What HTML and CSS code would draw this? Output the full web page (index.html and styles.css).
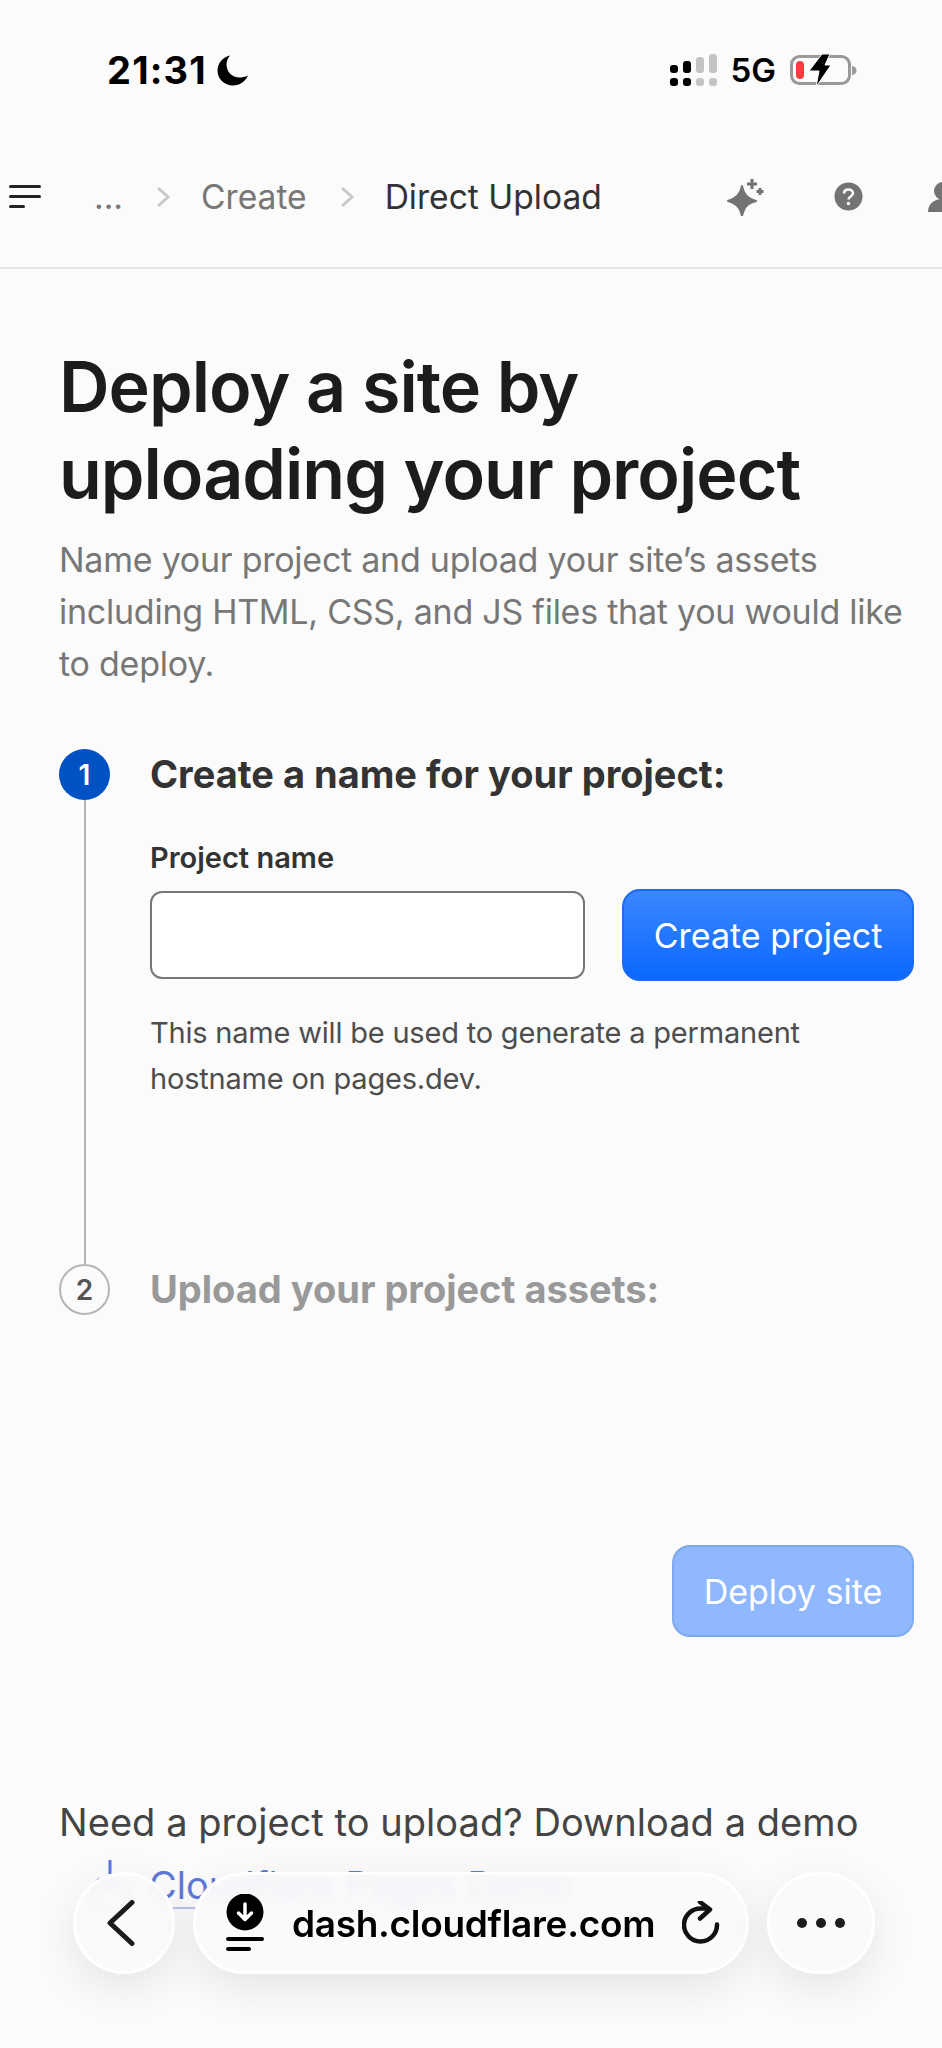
FILE: index.html
```html
<!DOCTYPE html>
<html lang="en">
<head>
    <meta charset="UTF-8">
    <meta name="viewport" content="width=device-width, initial-scale=1.0">
    <title>Direct Upload</title>
    <link rel="stylesheet" href="styles.css">
</head>
<body>
    <div class="status-bar">
        <div class="status-left">
            <span class="clock">21:31</span>
            <svg class="moon" width="32" height="31" viewBox="0 0 32 31"><path d="M13 0.5C6 2 0.5 8 0.5 15.500C0.500 24 7.500 30.500 16 30.500C22.500 30.500 28.500 26.500 31 20.500C28 22 25 22.500 22.500 22.500C15 22.500 9.500 16.500 9.500 9.500C9.500 6 10.800 3 13 0.500Z" fill="#000"/></svg>
        </div>
        <div class="status-right">
            <svg width="48" height="33" viewBox="0 0 48 33">
                <rect x="0" y="11" width="8" height="8" rx="3" fill="#000"/>
                <rect x="13" y="7" width="8" height="12" rx="3" fill="#000"/>
                <rect x="26" y="3" width="8" height="16" rx="3" fill="#c4c4c4"/>
                <rect x="39" y="0" width="8" height="19" rx="3" fill="#c4c4c4"/>
                <rect x="0" y="24" width="8" height="8" rx="3" fill="#000"/>
                <rect x="13" y="24" width="8" height="8" rx="3" fill="#000"/>
                <rect x="26" y="24" width="8" height="8" rx="3" fill="#c4c4c4"/>
                <rect x="39" y="24" width="8" height="8" rx="3" fill="#c4c4c4"/>
            </svg>
            <span class="network">5G</span>
            <svg width="67" height="33" viewBox="0 0 67 33">
                <rect x="1.500" y="2.500" width="58" height="27" rx="8" fill="none" stroke="#999" stroke-width="3"/>
                <path d="M62 12C65 12.500 66.500 14 66.500 16.500C66.500 19 65 20.500 62 21Z" fill="#999"/>
                <rect x="6" y="7" width="8" height="18" rx="4" fill="#ff3b3f"/>
                <path d="M32 0L40 0L35 11H41L26 33L29 17H19Z" fill="#000" stroke="#fbfbfb" stroke-width="1"/>
            </svg>
        </div>
    </div>

    <div class="nav">
        <svg class="menu-icon" width="32" height="24" viewBox="0 0 32 24">
            <rect x="0" y="0" width="32" height="3" rx="1.500" fill="#222"/>
            <rect x="0" y="10" width="32" height="3" rx="1.500" fill="#222"/>
            <rect x="0" y="20" width="16" height="3" rx="1.500" fill="#222"/>
        </svg>
        <span class="crumb crumb-more">...</span>
        <svg class="chevron" width="14" height="22" viewBox="0 0 14 22"><path d="M2 2L12 11L2 20" fill="none" stroke="#c9c9c9" stroke-width="3"/></svg>
        <span class="crumb">Create</span>
        <svg class="chevron" width="14" height="22" viewBox="0 0 14 22"><path d="M2 2L12 11L2 20" fill="none" stroke="#c9c9c9" stroke-width="3"/></svg>
        <span class="crumb crumb-current">Direct Upload</span>
        <svg class="spark-icon" width="38" height="38" viewBox="0 0 38 38">
            <path d="M15 8C16.500 16 20 20 29 23C20 25.500 17 29 15 38C13 29 9.500 25.500 1 23C9.500 20 13.500 16 15 8Z" fill="#737373" stroke="#737373" stroke-linejoin="round" stroke-width="2"/>
            <path d="M25 1V11M20 6H30" stroke="#737373" stroke-width="3"/>
            <path d="M33 10V17M29.500 13.500H36.500" stroke="#737373" stroke-width="3"/>
        </svg>
        <svg class="help-icon" width="29" height="29" viewBox="0 0 29 29">
            <circle cx="14.500" cy="14.500" r="14" fill="#737373"/>
            <path d="M10 11.500C10 8.800 12 7.500 14.500 7.500C17 7.500 19 9 19 11.300C19 14.500 14.500 14.500 14.500 17.500" fill="none" stroke="#fbfbfb" stroke-width="2.500"/>
            <circle cx="14.500" cy="21.500" r="1.700" fill="#fbfbfb"/>
        </svg>
        <svg class="user-icon" width="30" height="30" viewBox="0 0 30 30">
            <circle cx="15" cy="9" r="9" fill="#737373"/>
            <path d="M0 30C0 22 6 17 15 17C24 17 30 22 30 30Z" fill="#737373"/>
        </svg>
    </div>

    <div class="content">
        <h1 class="title">Deploy a site by uploading your project</h1>
        <p class="intro">Name your project and upload your site’s assets including HTML, CSS, and JS files that you would like to deploy.</p>

        <div class="step step-first">
            <div class="step-track">
                <div class="step-num step-num-active">1</div>
                <div class="step-line"></div>
            </div>
            <div class="step-body">
                <h2 class="step-title">Create a name for your project:</h2>
                <div class="field-label">Project name</div>
                <div class="field-row">
                    <input type="text" class="field-input">
                    <div class="btn">Create project</div>
                </div>
                <p class="field-help">This name will be used to generate a permanent hostname on pages.dev.</p>
            </div>
        </div>

        <div class="step">
            <div class="step-track">
                <div class="step-num">2</div>
            </div>
            <div class="step-body">
                <h2 class="step-title step-title-off">Upload your project assets:</h2>
            </div>
        </div>

        <div class="actions">
            <div class="btn btn-off">Deploy site</div>
        </div>

        <p class="demo-text">Need a project to upload? Download a demo</p>
        <div class="demo-link">
            <svg width="46" height="52" viewBox="0 0 46 52">
                <path d="M23 0V30M16 23L23 30L30 23" fill="none" stroke="#5b72d8" stroke-width="3"/>
                <path d="M13 19A18 18 0 1 0 33 19" fill="none" stroke="#5b72d8" stroke-width="3"/>
            </svg>
            <a class="demo-anchor">Cloudflare Pages Demo</a>
        </div>
    </div>

    <div class="browser-bar">
        <div class="bar-btn bar-back">
            <svg width="28" height="46" viewBox="0 0 28 46"><path d="M25 2.500L3 23L25 43.500" fill="none" stroke="#1c1c1c" stroke-width="5" stroke-linecap="round" stroke-linejoin="round"/></svg>
        </div>
        <div class="bar-url">
            <svg width="38" height="58" viewBox="0 0 38 58">
                <circle cx="19" cy="18" r="18.500" fill="#000"/>
                <path d="M19 10V25M12.500 19L19 25.500L25.500 19" fill="none" stroke="#fff" stroke-width="3.500" stroke-linecap="round" stroke-linejoin="round"/>
                <rect x="0" y="43" width="38" height="4" rx="2" fill="#000"/>
                <rect x="0" y="53" width="25" height="4" rx="2" fill="#000"/>
            </svg>
            <span class="url-text">dash.cloudflare.com</span>
            <svg width="38" height="44" viewBox="0 0 38 44">
                <path d="M35 23.500A16.500 16.500 0 1 1 20 7.500H25" fill="none" stroke="#111" stroke-width="4.500" stroke-linecap="round"/>
                <path d="M18 1L28 8.500L18 17.500" fill="none" stroke="#111" stroke-width="4.500" stroke-linecap="round" stroke-linejoin="round"/>
            </svg>
        </div>
        <div class="bar-btn bar-more">
            <span class="dot"></span><span class="dot"></span><span class="dot"></span>
        </div>
    </div>
</body>
</html>
```

FILE: styles.css
```css
* {
    margin: 0;
    padding: 0;
    box-sizing: border-box;
    font-family: 'Inter', 'Liberation Sans', sans-serif;
}

body {
    position: relative;
    width: 942px;
    height: 2048px;
    overflow: hidden;
    background-color: #fbfbfb;
    color: #1c1c1c;
}

.status-bar {
    display: flex;
    justify-content: space-between;
    align-items: center;
    height: 128px;
    padding: 50px 85px 38px 107px;
}

.status-left,
.status-right {
    display: flex;
    align-items: center;
}

.clock {
    font-size: 38px;
    font-weight: 700;
    color: #000;
    letter-spacing: 1.2px;
}

.moon {
    margin-left: 10px;
}

.network {
    margin: 0 14px 0 13px;
    font-size: 33px;
    font-weight: 600;
    color: #000;
}

.nav {
    display: flex;
    align-items: center;
    height: 141px;
    padding: 0 0 2px 9px;
    border-bottom: 2px solid #e4e4e4;
    overflow: hidden;
    white-space: nowrap;
}

.nav svg {
    flex-shrink: 0;
}

.crumb {
    font-size: 33.600px;
    color: #777;
}

.crumb-more {
    margin-left: 53px;
}

.crumb-current {
    color: #333;
}

.chevron {
    margin: 0 31px 0 33px;
}

.spark-icon {
    margin-left: 125px;
}

.help-icon {
    margin-left: 69px;
}

.user-icon {
    margin-left: 65px;
}

.content {
    padding: 74px 28px 0 59px;
}

.title {
    font-size: 70px;
    line-height: 87px;
    font-weight: 600;
    color: #1c1c1c;
    padding-right: 60px;
    letter-spacing: -1px;
}

.intro {
    margin-top: 17px;
    font-size: 34px;
    line-height: 52px;
    letter-spacing: -0.25px;
    color: #777;
}

.step {
    display: flex;
    gap: 40px;
}

.step-first {
    margin-top: 59px;
}

.step-track {
    display: flex;
    flex-direction: column;
    align-items: center;
    flex: 0 0 51px;
}

.step-num {
    display: flex;
    align-items: center;
    justify-content: center;
    width: 51px;
    height: 51px;
    border-radius: 50%;
    border: 2px solid #b5b5b5;
    font-size: 28px;
    font-weight: 600;
    color: #555;
}

.step-num-active {
    background-color: #0051c3;
    border: none;
    color: #fff;
}

.step-line {
    flex: 1;
    width: 2px;
    background-color: #b5b5b5;
}

.step-body {
    flex: 1;
}

.step-first .step-body {
    padding-bottom: 162px;
}

.step-title {
    font-size: 38px;
    line-height: 51px;
    font-weight: 700;
    color: #333;
}

.step-title-off {
    color: #999;
}

.field-label {
    margin-top: 40px;
    font-size: 29px;
    line-height: 36px;
    font-weight: 600;
    color: #333;
}

.field-row {
    display: flex;
    align-items: center;
    gap: 37px;
    margin-top: 13px;
}

.field-input {
    width: 435px;
    height: 88px;
    background: #fff;
    border: 2px solid #777;
    border-radius: 12px;
}

.btn {
    display: flex;
    align-items: center;
    justify-content: center;
    width: 292px;
    height: 92px;
    border: 2px solid #1a6cf5;
    border-radius: 18px;
    background: linear-gradient(#3d87ff, #0a68ff);
    font-size: 34px;
    color: #fff;
}

.btn-off {
    width: 242px;
    border-color: #7ea9ee;
    background: #8fb8ff;
}

.field-help {
    margin-top: 29px;
    font-size: 29px;
    line-height: 46px;
    letter-spacing: -0.2px;
    color: #4d4d4d;
}

.actions {
    display: flex;
    justify-content: flex-end;
    margin-top: 230px;
}

.demo-text {
    margin-top: 159px;
    font-size: 38px;
    line-height: 52px;
    letter-spacing: 0.05px;
    color: #444;
}

.demo-link {
    display: flex;
    align-items: flex-start;
    gap: 16px;
    margin-top: 12px;
    padding-left: 28px;
}

.demo-anchor {
    margin-top: 3px;
    font-size: 38px;
    line-height: 44px;
    color: #5f78d8;
    border-bottom: 2px solid #b9c4ee;
}

/* barra del navegador, va encima del contenido */
.browser-bar {
    position: absolute;
    left: 73px;
    top: 1872px;
    display: flex;
    gap: 18px;
}

.bar-btn,
.bar-url {
    display: flex;
    align-items: center;
    height: 102px;
    background: rgba(250, 250, 250, 0.92);
    border: 3px solid rgba(255, 255, 255, 0.95);
    border-radius: 51px;
    box-shadow: 0 14px 44px rgba(0, 0, 0, 0.09);
    backdrop-filter: blur(5px);
}

.bar-btn {
    justify-content: center;
}

.bar-back {
    width: 102px;
    padding-right: 6px;
}

.bar-more {
    width: 108px;
    gap: 9px;
}

.bar-url {
    width: 556px;
    padding-left: 30px;
}

.url-text {
    margin: 0 27px 0 28px;
    font-size: 37px;
    font-weight: 600;
    letter-spacing: -0.3px;
    color: #000;
}

.dot {
    width: 10px;
    height: 10px;
    border-radius: 50%;
    background-color: #1c1c1c;
}
```
